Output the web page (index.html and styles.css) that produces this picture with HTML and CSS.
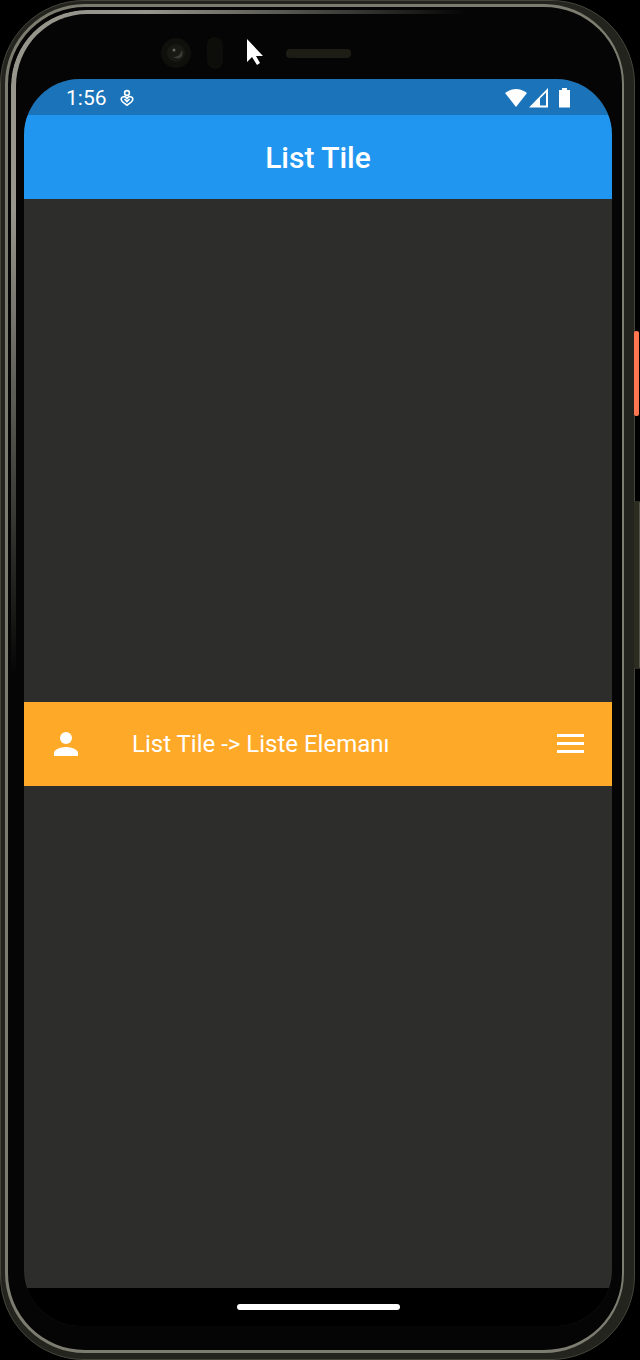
FILE: index.html
```html
<!DOCTYPE html>
<html lang="tr">
<head>
<meta charset="utf-8">
<meta name="viewport" content="width=device-width, initial-scale=1">
<title>List Tile</title>
<link rel="stylesheet" href="styles.css">
</head>
<body>
<div class="phone">
  <span class="side-key power"></span>
  <span class="side-key volume"></span>
  <div class="rim">
    <span class="shine"></span>
    <div class="sensors">
      <svg class="camera" viewBox="0 0 32 32" aria-hidden="true">
        <circle cx="16" cy="16" r="15" fill="#0f0f0b"/>
        <circle cx="16" cy="16" r="9" fill="#191914"/>
        <path d="M13 20c5 0 7-2 9-7 2 6-2 11-9 7z" fill="#3c3c38"/>
        <circle cx="14" cy="13" r="1.5" fill="#66665a"/>
      </svg>
      <span class="proximity"></span>
      <span class="speaker"></span>
      <svg class="cursor" viewBox="0 0 18 28" aria-hidden="true">
        <path d="M1 0v23l5-5 5 8 3-2-4-7h7z" fill="#fff"/>
      </svg>
    </div>
    <div class="screen">
      <div class="status-bar">
        <span class="clock">1:56</span>
        <svg class="debug-icon" viewBox="0 0 14 18" fill="none" stroke="#fff" stroke-width="1.6" aria-hidden="true">
          <circle cx="7" cy="4" r="2.4"/>
          <path d="M7 9.500C5 6.500 1.200 7.500 1.200 10.200c0 2.200 2.800 4 5.800 6 3-2 5.800-3.800 5.800-6C12.800 7.500 9 6.500 7 9.500z"/>
          <path d="M4.500 10 7 12.500 9.500 10"/>
        </svg>
        <svg class="system-icons" viewBox="0 0 66 20" fill="#fff" aria-hidden="true">
          <path d="M0 5Q11-3 22 5L11 19z"/>
          <path fill-rule="evenodd" d="M24 19.500 43 0v19.500zM35 10.500v7h6V4.500z"/>
          <path d="M54 2h3V0h5v2h3v17.500H54z"/>
        </svg>
      </div>
      <header class="app-bar"><h1>List Tile</h1></header>
      <main class="content">
        <div class="tile">
          <svg class="person" viewBox="0 0 24 24" fill="#fff" aria-hidden="true">
            <circle cx="12" cy="6" r="6"/>
            <path d="M0 24v-3c0-4 8-6 12-6s12 2 12 6v3z"/>
          </svg>
          <span class="tile-title">List Tile -&gt; Liste Elemanı</span>
          <button class="menu" type="button" aria-label="Menu">
            <svg viewBox="0 0 27 19" fill="#fff" aria-hidden="true">
              <path d="M0 0h27v3H0zM0 8h27v3H0zM0 16h27v3H0z"/>
            </svg>
          </button>
        </div>
      </main>
      <footer class="nav-bar"><span class="home-handle"></span></footer>
    </div>
  </div>
</div>
</body>
</html>
```
FILE: styles.css
```css
* {
  box-sizing: border-box;
}

body {
  margin: 0;
  background: #000;
  color: #fff;
  font-family: Roboto, "Noto Sans", sans-serif;
}

.phone {
  position: relative;
  display: flex;
  min-height: 100vh;
  margin-right: 5px;
  padding: 3px 10px 6px 4px;
  border: 1px solid #45453c;
  border-radius: 84px;
  background: #24241f;
}

.side-key {
  position: absolute;
  border-radius: 2px;
}

.power {
  top: 330px;
  right: -5px;
  width: 5px;
  height: 85px;
  background: #ff7650;
}

.volume {
  top: 500px;
  right: -6px;
  width: 6px;
  height: 168px;
  background: #2c2c20;
  border-right: 1px solid #55554a;
}

.rim {
  position: relative;
  display: flex;
  flex: 1;
  flex-direction: column;
  padding: 0 10px 24px 16px;
  border: 3px solid #7c7c70;
  border-right-width: 2px;
  border-radius: 80px;
  background: #050505;
}

.shine {
  position: absolute;
  inset: 3px;
  border: solid #96968c;
  border-width: 4px 0 0 5px;
  border-radius: 76px 0 0 0;
  -webkit-mask-image: radial-gradient(ellipse 75% 50% at 0 0, #000 30%, transparent 100%);
  mask-image: radial-gradient(ellipse 75% 50% at 0 0, #000 30%, transparent 100%);
}

.sensors {
  position: relative;
  display: flex;
  align-items: center;
  height: 72px;
  padding: 20px 0 0 136px;
}

.camera {
  width: 32px;
  height: 32px;
}

.proximity {
  width: 16px;
  height: 32px;
  margin-left: 15px;
  border-radius: 8px;
  background: #0d0d09;
}

.speaker {
  width: 65px;
  height: 9px;
  margin-left: 63px;
  border-radius: 4px;
  background: #1d1d16;
}

.cursor {
  position: absolute;
  top: 32px;
  left: 222px;
  width: 18px;
  height: 28px;
}

.screen {
  display: flex;
  flex: 1;
  flex-direction: column;
  overflow: hidden;
  border-radius: 56px;
  background: #2d2d2b;
}

.status-bar {
  display: flex;
  align-items: center;
  height: 36px;
  padding: 2px 41px 0 42px;
  background: #1b74b9;
}

.clock {
  font-size: 21px;
  line-height: 24px;
}

.debug-icon {
  width: 14px;
  height: 18px;
  margin-left: 13px;
}

.system-icons {
  width: 66px;
  height: 20px;
  margin-left: auto;
}

.app-bar {
  display: flex;
  align-items: center;
  justify-content: center;
  height: 84px;
  padding-top: 2px;
  background: #2196f0;
}

.app-bar h1 {
  margin: 0;
  font-size: 30px;
  font-weight: 500;
  line-height: 36px;
}

.content {
  display: flex;
  flex: 1;
  flex-direction: column;
  justify-content: center;
}

.tile {
  display: flex;
  align-items: center;
  height: 84px;
  padding: 0 28px 0 30px;
  background: #ffa928;
}

.person {
  width: 24px;
  height: 24px;
}

.tile-title {
  margin-left: 54px;
  font-size: 24px;
  line-height: 32px;
}

.menu {
  display: flex;
  margin-left: auto;
  padding: 0;
  border: 0;
  background: none;
}

.menu svg {
  width: 27px;
  height: 19px;
}

.nav-bar {
  display: flex;
  justify-content: center;
  height: 38px;
  padding-top: 16px;
  background: #000;
}

.home-handle {
  width: 163px;
  height: 6px;
  border-radius: 3px;
  background: #fff;
}
```
